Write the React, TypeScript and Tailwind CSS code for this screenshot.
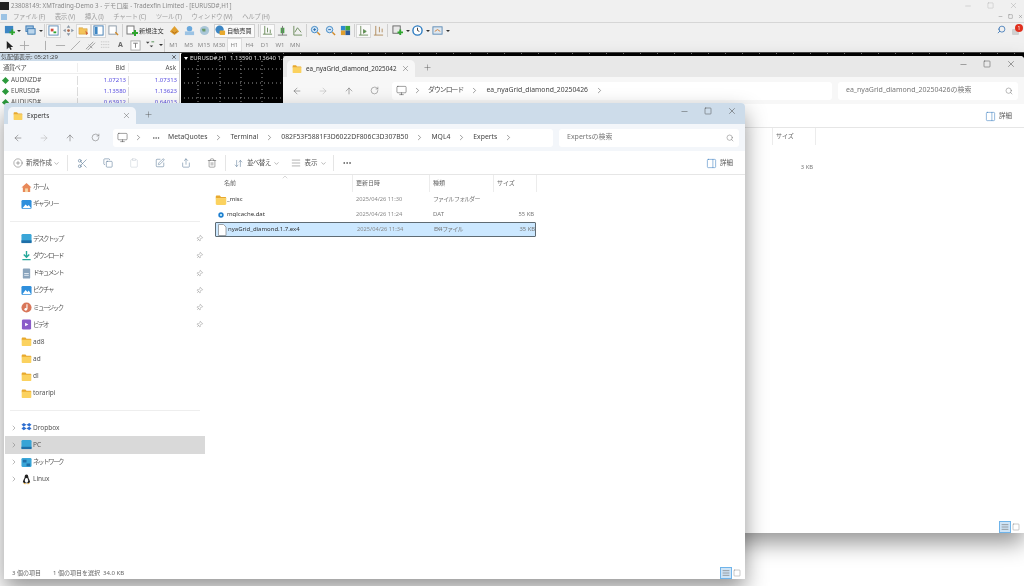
import type { ReactNode } from "react";
import {
  ArrowDownUp,
  ArrowLeft,
  ArrowRight,
  ArrowUp,
  ChevronDown,
  ChevronRight,
  ChevronUp,
  CirclePlus,
  Clipboard,
  Copy,
  Ellipsis,
  Minus,
  Monitor,
  PanelRight,
  Pin,
  Plus,
  RotateCw,
  Scissors,
  Search,
  Share,
  Square,
  Trash2,
  X,
  AlignJustify,
  SquarePen,
} from "lucide-react";

const jp = (s: string) => (/[^\x00-\x7f]/.test(s) ? "tracking-[-0.9px]" : "");

function Folder({ size = 11 }: { size?: number }) {
  return (
    <svg width={size} height={size} viewBox="0 0 16 16" className="shrink-0">
      <path d="M1 3.5C1 2.7 1.7 2 2.5 2h4l1.5 2h5.5c.8 0 1.5.7 1.5 1.5V6H1z" fill="#e8a92e" />
      <path d="M1 5.5h14v7.5c0 .8-.7 1.5-1.5 1.5h-11C1.700 14.500 1 13.800 1 13z" fill="#fbd25f" />
    </svg>
  );
}

function Tile({ color, children }: { color: string; children?: ReactNode }) {
  return (
    <svg width="11" height="11" viewBox="0 0 12 12" className="shrink-0">
      <rect x="0.5" y="1" width="11" height="10" rx="1.500" fill={color} />
      {children}
    </svg>
  );
}

const navItems: { label: string; icon: ReactNode; pin?: boolean; chevron?: boolean; active?: boolean }[] = [
  {
    label: "ホーム",
    icon: (
      <svg width="11" height="11" viewBox="0 0 12 12" className="shrink-0">
        <path d="M6 1 .5 6h1.500v5h8V6h1.500z" fill="#e8895a" />
        <rect x="4.500" y="7" width="3" height="4" fill="#f8d9a8" />
      </svg>
    ),
  },
  {
    label: "ギャラリー",
    icon: (
      <Tile color="#2f8fdc">
        <path d="M1.500 10 5 6l2 2 1.500-1.500L11 10z" fill="#fff" />
      </Tile>
    ),
  },
  { label: "", icon: null },
  {
    label: "デスクトップ",
    pin: true,
    icon: (
      <Tile color="#3aa6d8">
        <rect x="0.500" y="8" width="11" height="3" fill="#1f6fa8" />
      </Tile>
    ),
  },
  {
    label: "ダウンロード",
    pin: true,
    icon: (
      <svg width="11" height="11" viewBox="0 0 12 12" className="shrink-0">
        <path d="M6 1v6M3 5l3 3 3-3" stroke="#25a89a" strokeWidth="1.500" fill="none" />
        <path d="M1.500 10.500h9" stroke="#25a89a" strokeWidth="1.500" />
      </svg>
    ),
  },
  {
    label: "ドキュメント",
    pin: true,
    icon: (
      <svg width="11" height="11" viewBox="0 0 12 12" className="shrink-0">
        <rect x="2" y="0.500" width="8" height="11" rx="1" fill="#8aa4bc" />
        <path d="M3.500 6h5M3.500 8h5" stroke="#e6eef5" />
      </svg>
    ),
  },
  {
    label: "ピクチャ",
    pin: true,
    icon: (
      <Tile color="#2f8fdc">
        <path d="M1.500 10 5 5.500l2 2L8.500 6 11 10z" fill="#fff" />
      </Tile>
    ),
  },
  {
    label: "ミュージック",
    pin: true,
    icon: (
      <svg width="11" height="11" viewBox="0 0 12 12" className="shrink-0">
        <circle cx="6" cy="6" r="5.500" fill="#d9775a" />
        <path d="M6.500 2.500v5" stroke="#fff" strokeWidth="1.200" />
        <circle cx="5.200" cy="8" r="1.500" fill="#fff" />
      </svg>
    ),
  },
  {
    label: "ビデオ",
    pin: true,
    icon: (
      <svg width="11" height="11" viewBox="0 0 12 12" className="shrink-0">
        <rect x="1" y="0.500" width="10" height="11" rx="1.500" fill="#8a5bc9" />
        <path d="M4.500 4v4l3.500-2z" fill="#fff" />
      </svg>
    ),
  },
  { label: "ad8", icon: <Folder /> },
  { label: "ad", icon: <Folder /> },
  { label: "dl", icon: <Folder /> },
  { label: "toraripi", icon: <Folder /> },
  { label: "", icon: null },
  {
    label: "Dropbox",
    chevron: true,
    icon: (
      <svg width="11" height="11" viewBox="0 0 12 12" className="shrink-0">
        <path d="M3 1 .5 3 3 5l3-2zM9 1 6 3l3 2 2.500-2zM3 5 .5 7 3 9l3-2zM9 5 6 7l3 2 2.500-2z" fill="#2f6fd0" />
      </svg>
    ),
  },
  {
    label: "PC",
    chevron: true,
    active: true,
    icon: (
      <Tile color="#38a4d6">
        <rect x="0.500" y="8.500" width="11" height="2.500" fill="#1f6fa8" />
      </Tile>
    ),
  },
  {
    label: "ネットワーク",
    chevron: true,
    icon: (
      <Tile color="#3aa6d8">
        <path d="M2 3h4v3H2zM6 7h4v3H6z" fill="#1f6fa8" />
      </Tile>
    ),
  },
  {
    label: "Linux",
    chevron: true,
    icon: (
      <svg width="11" height="11" viewBox="0 0 12 12" className="shrink-0">
        <path d="M6 .5C4.500.5 4 2 4 3.500 4 5 2 7 2 9l2 1h4l2-1c0-2-2-4-2-5.500S7.500.5 6 .5z" fill="#222" />
        <ellipse cx="6" cy="7" rx="1.800" ry="2.600" fill="#fff" />
        <path d="M2 9.500 4.500 11.500 5 10zM10 9.500 7.500 11.500 7 10z" fill="#e8a92e" />
      </svg>
    ),
  },
];

type FileRow = { name: string; date: string; kind: string; size: string; icon: ReactNode; selected?: boolean };

const frontFiles: FileRow[] = [
  { name: "_misc", date: "2025/04/26 11:30", kind: "ファイル フォルダー", size: "", icon: <Folder size={12} /> },
  {
    name: "mqlcache.dat",
    date: "2025/04/26 11:24",
    kind: "DAT",
    size: "55 KB",
    icon: (
      <svg width="12" height="12" viewBox="0 0 12 12" className="shrink-0">
        <circle cx="6" cy="6" r="2.700" fill="#1f7fd0" />
        <circle cx="6" cy="6" r="1" fill="#dff" />
      </svg>
    ),
  },
  {
    name: "nyaGrid_diamond.1.7.ex4",
    date: "2025/04/26 11:34",
    kind: "EX4 ファイル",
    size: "35 KB",
    selected: true,
    icon: (
      <svg width="12" height="12" viewBox="0 0 12 12" className="shrink-0">
        <path d="M2.500.5h5l2.500 2.500v8.500h-7.500z" fill="#fff" stroke="#8a8f94" strokeWidth="0.800" />
      </svg>
    ),
  },
];

const backFiles: FileRow[] = [
  { name: "", date: "", kind: "", size: "", icon: null },
  { name: "", date: "", kind: "", size: "3 KB", icon: null },
];

function Sep() {
  return <ChevronRight size={9} strokeWidth={1.5} className="shrink-0 text-[#555]" />;
}

function ToolButton({ children }: { children: ReactNode }) {
  return <div className="w-[26px] flex justify-center text-[#4a6c8c]">{children}</div>;
}

function Explorer({
  title,
  crumbs,
  searchLabel,
  files,
  active,
  className,
}: {
  title: string;
  crumbs: string[];
  searchLabel: string;
  files: FileRow[];
  active?: boolean;
  className: string;
}) {
  return (
    <section
      className={`absolute w-[741px] flex flex-col rounded-t-[4px] bg-white text-[#444] shadow-[0_10px_22px_rgba(0,0,0,0.42)] overflow-hidden ${className}`}
    >
      <div className={`h-[21px] flex items-end pl-1 shrink-0 relative ${active ? "bg-[#cddcea]" : "bg-[#e8e8e8]"}`}>
        <div
          className={`w-[128px] h-[17px] rounded-t-[5px] flex items-center pl-[5px] pr-[5px] gap-[4px] text-[6.300px] text-[#333] ${active ? "bg-[#f3f6fa]" : "bg-[#f7f7f7]"}`}
        >
          <Folder size={10} />
          <span className="flex-1 whitespace-nowrap">{title}</span>
          <X size={9} strokeWidth={1.2} className="text-[#555] shrink-0" />
        </div>
        <Plus size={9} strokeWidth={1.2} className="ml-[8px] mb-[5px] text-[#555]" />
        <div className="ml-auto flex items-center gap-[15px] pr-[8px] self-start pt-[3px] text-[#444]">
          <Minus size={9} strokeWidth={1.2} />
          <Square size={8} strokeWidth={1.4} />
          <X size={10} strokeWidth={1.2} />
        </div>
      </div>
      <div className={`h-[27px] flex items-center shrink-0 ${active ? "bg-[#f3f6fa]" : "bg-[#f7f7f7]"}`}>
        <div className="w-[109px] flex items-center pl-[9px] gap-[16px] text-[#666] shrink-0">
          <ArrowLeft size={10} strokeWidth={1.3} />
          <ArrowRight size={10} strokeWidth={1.3} className="text-[#b5b5b5]" />
          <ArrowUp size={10} strokeWidth={1.3} />
          <RotateCw size={9} strokeWidth={1.3} />
        </div>
        <div className="w-[440px] h-[18px] bg-white rounded-[3px] flex items-center pl-[4px] gap-[6px] text-[6.800px] text-[#444] shrink-0 overflow-hidden">
          <Monitor size={11} strokeWidth={1.1} className="shrink-0" />
          <Sep />
          {active && <Ellipsis size={8} className="ml-[3px] mr-[2px] shrink-0 text-[#555]" />}
          {crumbs.map((c) => (
            <div key={c} className="flex items-center gap-[7px] mr-px">
              <span className={`whitespace-nowrap ${jp(c)}`}>{c}</span>
              <Sep />
            </div>
          ))}
        </div>
        <div className="ml-[6px] w-[180px] h-[18px] bg-white rounded-[3px] flex items-center justify-between pl-[8px] pr-[5px] text-[7px] text-[#777] shrink-0">
          <span className="whitespace-nowrap">{searchLabel}</span>
          <Search size={8} strokeWidth={1.5} />
        </div>
      </div>
      <div className="h-[24px] pt-px border-b border-[#e6e6e6] flex items-center pl-[9px] pr-[12px] text-[6.500px] text-[#555] shrink-0">
        {active && (
          <>
            <CirclePlus size={10} strokeWidth={1} className="text-[#444] mr-[3px]" />
            <span>新規作成</span>
            <ChevronDown size={7} className="ml-[1px] text-[#888]" />
            <div className="w-px h-[16px] bg-[#e5e5e5] ml-[7px] mr-[1px]" />
            <ToolButton>
              <Scissors size={11} strokeWidth={1.2} />
            </ToolButton>
            <ToolButton>
              <Copy size={10} strokeWidth={1.2} />
            </ToolButton>
            <ToolButton>
              <Clipboard size={10} strokeWidth={1.2} className="text-[#c4ccd4]" />
            </ToolButton>
            <ToolButton>
              <SquarePen size={10} strokeWidth={1.2} />
            </ToolButton>
            <ToolButton>
              <Share size={10} strokeWidth={1.2} />
            </ToolButton>
            <ToolButton>
              <Trash2 size={10} strokeWidth={1.2} className="text-[#555]" />
            </ToolButton>
            <div className="w-px h-[16px] bg-[#e5e5e5] mr-[8px]" />
            <ArrowDownUp size={9} strokeWidth={1.3} className="text-[#4a6c8c] mr-[4px]" />
            <span className="tracking-[-0.6px]">並べ替え</span>
            <ChevronDown size={7} className="ml-[2px] text-[#888]" />
            <AlignJustify size={10} strokeWidth={1.2} className="ml-[11px] mr-[4px] text-[#666]" />
            <span>表示</span>
            <ChevronDown size={7} className="ml-[2px] text-[#888]" />
            <div className="w-px h-[16px] bg-[#e5e5e5] ml-[6px] mr-[8px]" />
            <Ellipsis size={10} className="text-[#555]" />
          </>
        )}
        <div className="ml-auto flex items-center gap-[3px]">
          <PanelRight size={11} strokeWidth={1.2} className="text-[#3a7fc0]" />
          <span>詳細</span>
        </div>
      </div>
      <div className="flex-1 flex min-h-0">
        <nav className="w-[201px] shrink-0 pt-[3.500px] text-[6.500px] text-[#555]">
          {active &&
            navItems.map((item, i) =>
              item.icon ? (
                <div
                  key={item.label}
                  className={`h-[17.200px] ml-px flex items-center ${item.active ? "bg-[#d9d9d9]" : ""}`}
                >
                  <div className="w-[17px] flex justify-center text-[#777] shrink-0">
                    {item.chevron && <ChevronRight size={8} strokeWidth={1.5} />}
                  </div>
                  <span className="w-[11px] ml-[-1px] flex justify-center shrink-0">{item.icon}</span>
                  <span className={`ml-[1px] flex-1 whitespace-nowrap ${jp(item.label) && "tracking-[-1.500px]"}`}>
                    {item.label}
                  </span>
                  {item.pin && <Pin size={7} strokeWidth={1.5} className="mr-[2px] text-[#888] rotate-45" />}
                </div>
              ) : (
                <div key={i} className="h-[17.200px] flex items-center pl-[6px] pr-[5px]">
                  <div className="w-full h-px bg-[#eeeeee]" />
                </div>
              ),
            )}
        </nav>
        <div className="flex-1 min-w-0 pl-[10px] text-[5.800px]">
          <div className="relative h-[17px] flex items-stretch text-[6px] text-[#666]">
            {active && <ChevronUp size={8} strokeWidth={1} className="absolute left-[66px] top-[-2px] text-[#888]" />}
            <div className="w-[138px] pl-[9px] flex items-center border-r border-[#ececec]">{active && "名前"}</div>
            <div className="w-[77px] pl-[3px] flex items-center border-r border-[#ececec]">{active && "更新日時"}</div>
            <div className="w-[64px] pl-[3px] flex items-center border-r border-[#ececec]">{active && "種類"}</div>
            <div className="w-[43px] pl-[3px] flex items-center border-r border-[#ececec]">サイズ</div>
          </div>
          {files.map((f, i) => (
            <div
              key={i}
              className={`h-[15px] w-[321px] flex items-center ${f.selected ? "bg-[#cce8ff] border-[1.500px] border-[#5f6b73] rounded-[1px]" : ""}`}
            >
              <span className="w-[12px] shrink-0 flex justify-center">{f.icon}</span>
              <span className="w-[129px] text-[6px] text-[#333] whitespace-nowrap">{f.name}</span>
              <span className="w-[77px] text-[5.700px] text-[#8a8a8a] whitespace-nowrap">{f.date}</span>
              <span className={`w-[64px] text-[6px] text-[#777] whitespace-nowrap ${jp(f.kind)}`}>{f.kind}</span>
              <span className="w-[37px] text-right text-[#777] whitespace-nowrap">{f.size}</span>
            </div>
          ))}
        </div>
      </div>
      <div className="h-[15px] pt-[3px] flex items-center shrink-0 pl-[8px] pr-[4px] text-[6px] text-[#666]">
        {active && (
          <>
            <span className="w-[41px]">3 個の項目</span>
            <span>1 個の項目を選択&nbsp;&nbsp;34.0 KB</span>
          </>
        )}
        <div className="ml-auto flex items-center gap-[1px]">
          <div className="w-[12px] h-[12px] border border-[#6fb4ea] bg-[#cfe4f6] flex items-center justify-center">
            <AlignJustify size={8} className="text-[#777]" />
          </div>
          <Square size={8} strokeWidth={1.2} className="text-[#777]" />
        </div>
      </div>
    </section>
  );
}

function Ic({ children, w = 15, active }: { children: ReactNode; w?: number; active?: boolean }) {
  return (
    <div
      className={`h-[14px] flex items-center justify-center shrink-0 ${active ? "bg-[#fafafa] border border-[#d8d8d8]" : ""}`}
      style={{ width: w }}
    >
      <svg width="11" height="11" viewBox="0 0 12 12">
        {children}
      </svg>
    </div>
  );
}

function Caret() {
  return <span className="w-0 h-0 border-x-[2px] border-x-transparent border-t-[2px] border-t-[#333] ml-[1px]" />;
}

function Divider() {
  return <div className="w-px h-[13px] bg-[#cfcfcf] mx-[1px] shrink-0" />;
}

const Plus12 = <path d="M6 7h2V5h2v2h2v2h-2v2H8V9H6z" fill="#2ea52e" />;

function Mt4Toolbars() {
  return (
    <div className="text-[6.200px] text-[#555]">
      <div className="h-[15px] pl-[2px] flex items-center">
        <Ic w={14}>
          <rect x="1" y="1" width="9" height="8" fill="#3c86c4" />
          {Plus12}
        </Ic>
        <Caret />
        <div className="w-[2px]" />
        <Ic>
          <rect x="1" y="1" width="8" height="6" fill="#9cc3e4" stroke="#3c78b0" />
          <rect x="3" y="4" width="8" height="6" fill="#bcd6ec" stroke="#3c78b0" />
        </Ic>
        <Caret />
        <Divider />
        <Ic active>
          <rect x="1" y="1" width="10" height="10" fill="#fff" stroke="#5c8ab4" />
          <path d="M3 4h3v3H3z" fill="#d04a3a" />
          <path d="M6 7h3v2H6z" fill="#2ea52e" />
        </Ic>
        <Ic>
          <path d="M6 0 8 3H4zM6 12 4 9h4zM0 6 3 4v4zM12 6 9 8V4z" fill="#8a98a6" />
          <circle cx="6" cy="6" r="1.500" fill="#b06a4a" />
        </Ic>
        <Ic active>
          <path d="M1 3h4l1 1h4v6H1z" fill="#f3c35a" stroke="#c9922a" strokeWidth="0.500" />
          <path d="M8 6l3 3-2 2z" fill="#d0603a" />
        </Ic>
        <Ic active>
          <rect x="1" y="1" width="10" height="10" fill="#fff" stroke="#3c78b0" />
          <rect x="2" y="2" width="3" height="8" fill="#3c86c4" />
        </Ic>
        <Ic>
          <rect x="1" y="1" width="8" height="9" fill="#fff" stroke="#8a98a6" />
          <path d="M8 8l3 3" stroke="#d08a2a" strokeWidth="1.500" />
        </Ic>
        <Divider />
        <div className="flex items-center gap-[1px] w-[38px] ml-[2px] text-[#333] shrink-0">
          <svg width="12" height="12" viewBox="0 0 12 12" className="shrink-0">
            <rect x="1" y="1" width="7" height="8" fill="#fff" stroke="#777" />
            {Plus12}
          </svg>
          <span className="whitespace-nowrap">新規注文</span>
        </div>
        <div className="w-[3px]" />
        <Ic>
          <path d="M1 7 6 1l5 6-5 4z" fill="#e0a030" />
          <path d="M3 7l3 2 3-2" stroke="#b06a1a" fill="none" />
        </Ic>
        <Ic>
          <circle cx="6" cy="4" r="3" fill="#6aa8dc" />
          <rect x="1" y="7" width="10" height="4" fill="#9cc3e4" />
        </Ic>
        <Ic>
          <circle cx="6" cy="6" r="5" fill="#a9c6d8" />
          <path d="M3 4h4v3H4z" fill="#6a9a6a" />
        </Ic>
        <div className="ml-[2px] w-[41px] h-[14px] flex items-center gap-[1px] border border-[#d0d0d0] bg-[#fafafa] text-[#333] shrink-0">
          <svg width="11" height="11" viewBox="0 0 12 12" className="shrink-0">
            <circle cx="5" cy="5" r="4.500" fill="#3c86c4" />
            <rect x="5" y="6" width="6" height="5" rx="1" fill="#e8a92e" />
          </svg>
          <span className="whitespace-nowrap">自動売買</span>
        </div>
        <div className="w-[2px]" />
        <Divider />
        <Ic active>
          <path d="M3 1v9M1 10h10M6 3v5M9 5v4" stroke="#6a8a5a" fill="none" />
        </Ic>
        <Ic>
          <rect x="4" y="3" width="4" height="6" fill="#4aa04a" />
          <path d="M6 1v10M1 11h10" stroke="#777" />
        </Ic>
        <Ic>
          <path d="M2 1v10h9M3 8l3-5 4 5" stroke="#6a8a5a" fill="none" />
        </Ic>
        <Divider />
        <Ic>
          <circle cx="5" cy="5" r="3.500" fill="#cfe4f6" stroke="#3c86c4" />
          <path d="M8 8l3 3" stroke="#d08a2a" strokeWidth="1.500" />
          <path d="M3.500 5h3M5 3.500v3" stroke="#2a6aa8" />
        </Ic>
        <Ic>
          <circle cx="5" cy="5" r="3.500" fill="#cfe4f6" stroke="#3c86c4" />
          <path d="M8 8l3 3" stroke="#d08a2a" strokeWidth="1.500" />
          <path d="M3.500 5h3" stroke="#2a6aa8" />
        </Ic>
        <Ic>
          <rect x="1" y="1" width="5" height="5" fill="#2e8ad0" />
          <rect x="6" y="1" width="5" height="5" fill="#3ca83c" />
          <rect x="1" y="6" width="5" height="5" fill="#e0a030" />
          <rect x="6" y="6" width="5" height="5" fill="#2a5a9a" />
        </Ic>
        <Divider />
        <Ic active>
          <path d="M3 1v10M1 11h10M6 5l3 2-3 2z" stroke="#6a8a5a" fill="#4aa04a" />
        </Ic>
        <Ic>
          <path d="M3 1v10M1 11h10M7 2v6M10 4v4" stroke="#b08a5a" fill="none" />
        </Ic>
        <Divider />
        <div className="w-px" />
        <Ic>
          <rect x="1" y="1" width="8" height="8" fill="#e8e8e8" stroke="#666" />
          {Plus12}
        </Ic>
        <Caret />
        <Ic>
          <circle cx="6" cy="6" r="5" fill="#fff" stroke="#2a7ac0" strokeWidth="1.500" />
          <path d="M6 3v3l2 1" stroke="#333" fill="none" />
        </Ic>
        <Caret />
        <Ic>
          <rect x="1" y="2" width="10" height="8" fill="#dfe8f0" stroke="#5c8ab4" />
          <path d="M3 7l3-2 3 2" stroke="#d0803a" fill="none" />
        </Ic>
        <Caret />
      </div>
      <div className="h-[14px] pl-[2px] flex items-center">
        <Ic>
          <path d="M3 1v9l2.500-2 1.500 3 1.500-.8L7 7.500h3z" fill="#222" />
        </Ic>
        <Ic>
          <path d="M6 1v10M1 6h10" stroke="#aaa" />
        </Ic>
        <div className="w-[3px]" />
        <div className="w-[3px]" />
        <Ic>
          <path d="M6 1v10" stroke="#aaa" />
        </Ic>
        <Ic>
          <path d="M1 6h10" stroke="#aaa" />
        </Ic>
        <Ic>
          <path d="M1 11 11 1" stroke="#aaa" />
        </Ic>
        <Ic>
          <path d="M1 10 9 2M3 11l8-8M4 5l4 4" stroke="#999" />
        </Ic>
        <Ic>
          <path d="M1 2h10M1 5h10M1 8h10" stroke="#bbb" strokeDasharray="1 1" />
        </Ic>
        <div className="w-[15px] text-center text-[7px] font-bold text-[#666] shrink-0">A</div>
        <Ic>
          <rect x="1" y="1" width="10" height="10" fill="#fff" stroke="#aaa" />
          <path d="M3.500 3.500h5M6 3.500v5" stroke="#777" />
        </Ic>
        <Ic>
          <path d="M1 2h4L3 4zM5 6h4L7 8z" fill="#444" />
          <path d="M7 2h3" stroke="#4a8a4a" />
        </Ic>
        <Caret />
        <Divider />
        <div className="flex items-center text-[6px] text-[#888]">
          {["M1", "M5", "M15", "M30", "H1", "H4", "D1", "W1", "MN"].map((t) => (
            <div
              key={t}
              className={`w-[15.200px] h-[14px] flex items-center justify-center ${t === "H1" ? "bg-[#fafafa] border border-[#ddd]" : ""}`}
            >
              {t}
            </div>
          ))}
        </div>
      </div>
    </div>
  );
}

function MarketWatch() {
  const rows = [
    ["AUDNZD#", "1.07213", "1.07313"],
    ["EURUSD#", "1.13580", "1.13623"],
    ["AUDUSD#", "0.63912", "0.64013"],
  ];
  return (
    <div className="w-[180px] h-[60px] shrink-0 bg-white border-r border-[#cfcfcf] text-[6.300px] text-[#555]">
      <div className="h-[8px] bg-[#cddcea] flex items-center justify-between px-[1px] text-[6px] leading-none text-[#444]">
        <span>気配値表示: 05:21:29</span>
        <X size={6} strokeWidth={2.500} className="mr-[1px] text-[#222]" />
      </div>
      <div className="mt-[1px] h-[12px] flex items-center border-b border-[#eee]">
        <div className="w-[77px] pl-[3px] tracking-[-0.5px]">通貨ペア</div>
        <div className="w-[51px] text-right pr-[3px] border-l border-[#eee]">Bid</div>
        <div className="w-[51px] text-right pr-[3px] border-l border-[#eee]">Ask</div>
      </div>
      {rows.map((r) => (
        <div key={r[0]} className="h-[10px] mt-px flex items-center">
          <div className="w-[77px] flex items-center gap-[3px] pl-[3px]">
            <span className="w-[5px] h-[5px] rotate-45 bg-[#2c9a3c]" />
            <span>{r[0]}</span>
          </div>
          <div className="w-[51px] text-right pr-[2px] border-l border-[#ddd] text-[6px] text-[#5a4fe0]">{r[1]}</div>
          <div className="w-[51px] text-right pr-[2px] border-l border-[#ddd] text-[6px] text-[#5a4fe0]">{r[2]}</div>
        </div>
      ))}
    </div>
  );
}

function Chart() {
  return (
    <div className="flex-1 h-[60px] relative bg-black ml-px overflow-hidden">
      <svg className="absolute inset-0" width="843" height="60">
        <path
          d="M3 16h280M3 30h280M3 45h280M17 8v60M39 8v60M60 8v60M81 8v60"
          stroke="#9a9a9a"
          strokeWidth="1"
          strokeDasharray="1 3"
        />
        <path d="M0 .5h843" stroke="#777" strokeWidth="1" strokeDasharray="1 16" />
      </svg>
      <div className="relative h-[11px] flex items-center pl-[3px] gap-[2px] text-[6px] text-[#e8e8e8] whitespace-nowrap">
        <span className="w-0 h-0 border-x-[2px] border-x-transparent border-t-[3px] border-t-white" />
        <span>EURUSD#,H1&nbsp;&nbsp;1.13590 1.13640 1.13565 1.13580</span>
      </div>
    </div>
  );
}

export default function App() {
  return (
    <div className="relative w-[1024px] h-[586px] overflow-hidden bg-white blur-[0.4px] font-['Noto_Sans','Noto_Sans_CJK_JP',sans-serif]">
      <header className="h-[52px] bg-[#f0f0f0] relative">
        <div className="h-[11px] flex items-center gap-[2px] text-[6.200px] text-[#8a8a8a] whitespace-nowrap">
          <span className="w-[9px] h-[8px] bg-[#222] shrink-0" />
          <span>23808149: XMTrading-Demo 3 - デモ口座 - Tradexfin Limited - [EURUSD#,H1]</span>
          <div className="ml-auto flex items-center gap-[15px] pr-[6px] text-[#999]">
            <Minus size={8} strokeWidth={1} />
            <Square size={7} strokeWidth={1} />
            <X size={9} strokeWidth={1} />
          </div>
        </div>
        <div className="h-[12px] flex items-center text-[6.500px] text-[#a0a0a0] border-b border-[#d6d6d6] whitespace-nowrap">
          <span className="w-[6px] h-[6px] ml-[1px] mr-[6px] bg-[#9cc3e4] shrink-0" />
          <div className="flex gap-[10px] tracking-[-0.4px]">
            <span>ファイル (F)</span>
            <span>表示 (V)</span>
            <span>挿入 (I)</span>
            <span>チャート (C)</span>
            <span>ツール (T)</span>
            <span>ウィンドウ (W)</span>
            <span>ヘルプ (H)</span>
          </div>
          <div className="ml-auto flex items-center gap-[5px] pr-[1px] text-[#777]">
            <Minus size={5} />
            <Square size={5} />
            <X size={5} />
          </div>
        </div>
        <Mt4Toolbars />
        <div className="absolute right-[1px] top-[24px] flex items-center gap-[6px]">
          <Search size={9} strokeWidth={2} className="text-[#2a6ab0] -scale-x-100" />
          <div className="relative w-[11px] h-[11px]">
            <span className="absolute left-0 bottom-0 w-[7px] h-[6px] rounded-[1px] bg-[#d0d0d0]" />
            <span className="absolute right-0 top-0 w-[8px] h-[8px] rounded-full bg-[#e0301e] text-[5px] leading-[8px] text-center text-white">
              1
            </span>
          </div>
        </div>
      </header>
      <div className="flex items-start border-t border-[#444]">
        <MarketWatch />
        <Chart />
      </div>

      <Explorer
        className="left-[283px] top-[56px] h-[477px]"
        title="ea_nyaGrid_diamond_2025042"
        crumbs={["ダウンロード", "ea_nyaGrid_diamond_20250426"]}
        searchLabel="ea_nyaGrid_diamond_20250426の検索"
        files={backFiles}
      />
      <Explorer
        active
        className="left-[4px] top-[103px] h-[476px]"
        title="Experts"
        crumbs={["MetaQuotes", "Terminal", "082F53F5881F3D6022DF806C3D307B50", "MQL4", "Experts"]}
        searchLabel="Expertsの検索"
        files={frontFiles}
      />
    </div>
  );
}
